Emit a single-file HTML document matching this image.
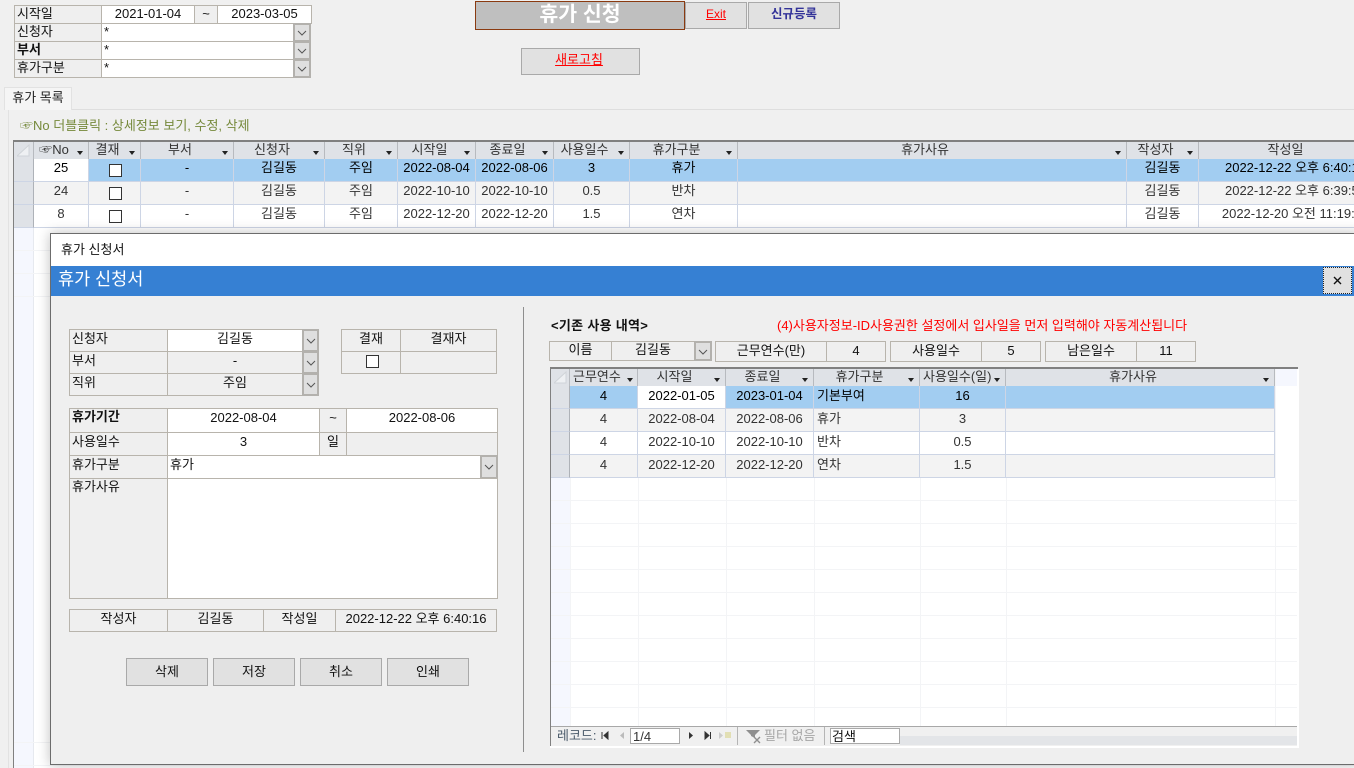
<!DOCTYPE html>
<html lang="ko"><head><meta charset="utf-8"><title>휴가 신청</title>
<style>
*{box-sizing:border-box}
html,body{margin:0;padding:0;width:1354px;height:768px;overflow:hidden;background:#f0f0f0}
body{position:relative;font:13px/16px "Liberation Sans","Noto Sans CJK KR",sans-serif;color:#111}
div,span,svg{position:absolute}
.c{white-space:nowrap;overflow:hidden;text-align:center}
.f{border:1px solid #b8b4ac;white-space:nowrap;overflow:hidden;text-align:center;background:#efefef;line-height:16px}
.d .f{padding-top:1px}
.l{text-align:left;padding-left:2px}
.w{background:#fff}
.dd{background:#dfdfdf;border:2px solid #b3b1ad}
.dd svg{left:2px;top:4px}
.btn{background:#e1e1e1;border:1px solid #a9a9a9;text-align:center;white-space:nowrap}
.red{color:#f00;text-decoration:underline}
.h{background:#dfe2e7;border-right:1px solid #b7babf;color:#333;height:17px;line-height:15px;top:0;text-align:center;white-space:nowrap;overflow:hidden;padding-right:14px}
.h i{position:absolute;right:5px;top:9px;width:0;height:0;border:3px solid transparent;border-top:4px solid #222;border-bottom:0}
.np{padding-right:0}
#sg .h{line-height:16px}
.r{left:0;height:23px;color:#333}
.r>div{top:0;height:23px;border-right:1px solid #cdd5e5;border-bottom:1px solid #cdd5e5;text-align:center;line-height:18px;white-space:nowrap;overflow:hidden}
#sg .r>div{padding-top:1px}
.sel{color:#000}.sel>div{background:#a2cdf1}
.alt>div{background:#f3f3f3}.wh>div{background:#fff}
.r>div.s{background:#dfe2e7;border-right:1px solid #aeb2b8}
.r>div.foc{background:#fff}
.a0{left:21px;width:55px}.a1{left:76px;width:52px}.a2{left:128px;width:93px}.a3{left:221px;width:91px}.a4{left:312px;width:73px}.a5{left:385px;width:78px}.a6{left:463px;width:78px}.a7{left:541px;width:76px}.a8{left:617px;width:108px}.a9{left:725px;width:389px}.a10{left:1114px;width:72px}.a11{left:1186px;width:194px}
.b0{left:20px;width:68px}.b1{left:88px;width:88px}.b2{left:176px;width:88px}.b3{left:264px;width:106px}.b4{left:370px;width:86px}.b5{left:456px;width:269px}
.ck{background:#fff;border:1px solid #333;width:13px;height:13px}
.q{left:0;width:100%;height:1px;background:#f3f4f6}
.v{top:0;bottom:0;width:1px;background:#f3f4f6}
</style></head><body>

<!-- top filter -->
<div class="f l" style="left:14px;top:5px;width:88px;height:19px">시작일</div>
<div class="f w" style="left:101px;top:5px;width:94px;height:19px">2021-01-04</div>
<div class="f" style="left:194px;top:5px;width:24px;height:19px">~</div>
<div class="f w" style="left:217px;top:5px;width:95px;height:19px">2023-03-05</div>
<div class="f l" style="left:14px;top:23px;width:88px;height:19px">신청자</div>
<div class="f l w" style="left:101px;top:23px;width:193px;height:19px">*</div>
<div class="dd" style="left:293px;top:23px;width:18px;height:19px"><svg width="10" height="8" viewBox="0 0 10 8"><path d="M1 2l4 4 4-4" fill="none" stroke="#555" stroke-width="1"/></svg></div>
<div class="f l" style="left:14px;top:41px;width:88px;height:19px;font-weight:bold">부서</div>
<div class="f l w" style="left:101px;top:41px;width:193px;height:19px">*</div>
<div class="dd" style="left:293px;top:41px;width:18px;height:19px"><svg width="10" height="8" viewBox="0 0 10 8"><path d="M1 2l4 4 4-4" fill="none" stroke="#555" stroke-width="1"/></svg></div>
<div class="f l" style="left:14px;top:59px;width:88px;height:19px">휴가구분</div>
<div class="f l w" style="left:101px;top:59px;width:193px;height:19px">*</div>
<div class="dd" style="left:293px;top:59px;width:18px;height:19px"><svg width="10" height="8" viewBox="0 0 10 8"><path d="M1 2l4 4 4-4" fill="none" stroke="#555" stroke-width="1"/></svg></div>

<!-- title and buttons -->
<div class="c" style="left:475px;top:1px;width:210px;height:29px;background:#bfbfbf;border:1px solid #8a3a10;color:#fff;font-weight:bold;font-size:20.500px;line-height:26px">휴가 신청</div>
<div class="btn" style="left:685px;top:2px;width:62px;height:27px;line-height:23px;font-size:12px"><span class="red" style="position:static">Exit</span></div>
<div class="btn" style="left:748px;top:2px;width:92px;height:27px;line-height:23px;color:#333399;font-weight:bold;font-size:12.500px">신규등록</div>
<div class="btn" style="left:521px;top:48px;width:119px;height:27px;line-height:22px;padding-right:3px"><span class="red" style="position:static">새로고침</span></div>

<!-- tab -->
<div style="left:8px;top:109px;width:1346px;height:1px;background:#dedede"></div>
<div style="left:8px;top:110px;width:1px;height:658px;background:#e2e2e2"></div>
<div class="c" style="left:4px;top:87px;width:68px;height:23px;background:#f5f5f5;border:1px solid #e2e2e2;border-bottom:0;line-height:20px;color:#222">휴가 목록</div>
<div class="c" style="left:20px;top:117px;width:260px;height:18px;line-height:17px;text-align:left;color:#75893a">☞No 더블클릭 : 상세정보 보기, 수정, 삭제</div>

<!-- main grid -->
<div style="left:13px;top:140px;width:1341px;height:628px;background:#fff;border-top:2px solid #808080;overflow:hidden">
  <div style="left:0;top:85px;width:20px;bottom:0;background:#f5f7fe"></div>
  <div class="v" style="left:20px;background:#e6e9ef"></div>
  <div class="q" style="top:108px"></div><div class="q" style="top:131px"></div><div class="q" style="top:154px"></div>
  <div class="q" style="top:600px"></div><div class="q" style="top:623px"></div>
  <div class="h np" style="left:0;width:21px"><svg style="left:4px;top:2px" width="13" height="13"><path d="M0 12L12 1V12Z" fill="#eef0f3" stroke="#cfd3d8"/></svg></div>
  <div class="h a0">☞No<i></i></div>
  <div class="h a1">결재<i></i></div>
  <div class="h a2">부서<i></i></div>
  <div class="h a3">신청자<i></i></div>
  <div class="h a4">직위<i></i></div>
  <div class="h a5">시작일<i></i></div>
  <div class="h a6">종료일<i></i></div>
  <div class="h a7">사용일수<i></i></div>
  <div class="h a8">휴가구분<i></i></div>
  <div class="h a9">휴가사유<i></i></div>
  <div class="h a10">작성자<i></i></div>
  <div class="h a11 np" style="width:174px">작성일</div>

  <div class="r sel" style="top:17px;width:1341px">
    <div class="s" style="left:0;width:21px"></div>
    <div class="a0 foc">25</div><div class="a1"></div><div class="a2">-</div><div class="a3">김길동</div><div class="a4">주임</div><div class="a5">2022-08-04</div><div class="a6">2022-08-06</div><div class="a7">3</div><div class="a8">휴가</div><div class="a9"></div><div class="a10">김길동</div><div class="a11">2022-12-22 오후 6:40:16</div>
  </div>
  <div class="r alt" style="top:40px;width:1341px">
    <div class="s" style="left:0;width:21px"></div>
    <div class="a0">24</div><div class="a1"></div><div class="a2">-</div><div class="a3">김길동</div><div class="a4">주임</div><div class="a5">2022-10-10</div><div class="a6">2022-10-10</div><div class="a7">0.5</div><div class="a8">반차</div><div class="a9"></div><div class="a10">김길동</div><div class="a11">2022-12-22 오후 6:39:55</div>
  </div>
  <div class="r wh" style="top:63px;width:1341px">
    <div class="s" style="left:0;width:21px"></div>
    <div class="a0">8</div><div class="a1"></div><div class="a2">-</div><div class="a3">김길동</div><div class="a4">주임</div><div class="a5">2022-12-20</div><div class="a6">2022-12-20</div><div class="a7">1.5</div><div class="a8">연차</div><div class="a9"></div><div class="a10">김길동</div><div class="a11">2022-12-20 오전 11:19:21</div>
  </div>
  <div class="ck" style="left:96px;top:22px"></div>
  <div class="ck" style="left:96px;top:45px"></div>
  <div class="ck" style="left:96px;top:68px"></div>
  <div style="left:0;top:0;width:1px;bottom:0;background:#808080"></div>
</div>

<!-- dialog -->
<div style="left:50px;top:233px;width:1310px;height:532px;background:#efefef;border:1px solid #6c6c6c;border-right:0;box-shadow:0 0 12px rgba(0,0,0,.25)"></div>
<div style="left:51px;top:234px;width:1303px;height:32px;background:#fff"></div>
<div class="c" style="left:61px;top:241px;width:90px;height:18px;line-height:17px;text-align:left">휴가 신청서</div>
<div style="left:51px;top:266px;width:1303px;height:30px;background:#3680d3"></div>
<div class="c" style="left:58px;top:269px;width:110px;height:22px;line-height:21px;text-align:left;color:#fff;font-size:17.500px">휴가 신청서</div>
<div style="left:1323px;top:267px;width:29px;height:27px;background:#e1e1e1;border:1px dotted #222"><svg style="left:8px;top:7px" width="11" height="11" viewBox="0 0 11 11"><path d="M2 2l7 7M9 2l-7 7" stroke="#111" stroke-width="1.400" fill="none"/></svg></div>

<!-- left form -->
<div class="d" style="left:0;top:0">
<div class="f l" style="left:69px;top:329px;width:99px;height:23px">신청자</div>
<div class="f w" style="left:167px;top:329px;width:136px;height:23px">김길동</div>
<div class="dd" style="left:302px;top:329px;width:17px;height:23px"><svg style="top:6px;left:2px" width="10" height="8" viewBox="0 0 10 8"><path d="M1 2l4 4 4-4" fill="none" stroke="#555"/></svg></div>
<div class="f l" style="left:69px;top:351px;width:99px;height:23px">부서</div>
<div class="f" style="left:167px;top:351px;width:136px;height:23px">-</div>
<div class="dd" style="left:302px;top:351px;width:17px;height:23px"><svg style="top:6px;left:2px" width="10" height="8" viewBox="0 0 10 8"><path d="M1 2l4 4 4-4" fill="none" stroke="#555"/></svg></div>
<div class="f l" style="left:69px;top:373px;width:99px;height:23px">직위</div>
<div class="f" style="left:167px;top:373px;width:136px;height:23px">주임</div>
<div class="dd" style="left:302px;top:373px;width:17px;height:23px"><svg style="top:6px;left:2px" width="10" height="8" viewBox="0 0 10 8"><path d="M1 2l4 4 4-4" fill="none" stroke="#555"/></svg></div>

<div class="f" style="left:341px;top:329px;width:60px;height:23px">결재</div>
<div class="f" style="left:400px;top:329px;width:97px;height:23px">결재자</div>
<div class="f" style="left:341px;top:351px;width:60px;height:23px"></div>
<div class="f" style="left:400px;top:351px;width:97px;height:23px"></div>
<div class="ck" style="left:366px;top:355px"></div>

<div class="f l" style="left:69px;top:408px;width:99px;height:25px;font-weight:bold;padding-top:0">휴가기간</div>
<div class="f w" style="left:167px;top:408px;width:153px;height:25px">2022-08-04</div>
<div class="f" style="left:319px;top:408px;width:28px;height:25px">~</div>
<div class="f w" style="left:346px;top:408px;width:152px;height:25px">2022-08-06</div>
<div class="f l" style="left:69px;top:432px;width:99px;height:24px">사용일수</div>
<div class="f w" style="left:167px;top:432px;width:153px;height:24px">3</div>
<div class="f" style="left:319px;top:432px;width:28px;height:24px">일</div>
<div class="f" style="left:346px;top:432px;width:152px;height:24px"></div>
<div class="f l" style="left:69px;top:455px;width:99px;height:24px">휴가구분</div>
<div class="f l w" style="left:167px;top:455px;width:314px;height:24px">휴가</div>
<div class="dd" style="left:480px;top:455px;width:18px;height:24px"><svg style="top:6px;left:2px" width="10" height="8" viewBox="0 0 10 8"><path d="M1 2l4 4 4-4" fill="none" stroke="#555"/></svg></div>
<div class="f l" style="left:69px;top:478px;width:99px;height:121px;padding-top:0">휴가사유</div>
<div class="f w" style="left:167px;top:478px;width:331px;height:121px"></div>

<div class="f" style="left:69px;top:609px;width:99px;height:23px">작성자</div>
<div class="f" style="left:167px;top:609px;width:97px;height:23px">김길동</div>
<div class="f" style="left:263px;top:609px;width:73px;height:23px">작성일</div>
<div class="f" style="left:335px;top:609px;width:162px;height:23px">2022-12-22 오후 6:40:16</div>
</div>

<div class="btn" style="left:126px;top:658px;width:82px;height:28px;line-height:25px">삭제</div>
<div class="btn" style="left:213px;top:658px;width:82px;height:28px;line-height:25px">저장</div>
<div class="btn" style="left:300px;top:658px;width:82px;height:28px;line-height:25px">취소</div>
<div class="btn" style="left:387px;top:658px;width:82px;height:28px;line-height:25px">인쇄</div>

<div style="left:523px;top:307px;width:1px;height:445px;background:#8e8e8e"></div>

<!-- right side -->
<div class="c" style="left:551px;top:318px;width:110px;height:17px;text-align:left;font-weight:bold;letter-spacing:.3px">&lt;기존 사용 내역&gt;</div>
<div class="c" style="left:777px;top:318px;width:420px;height:17px;text-align:left;color:#f00">(4)사용자정보-ID사용권한 설정에서 입사일을 먼저 입력해야 자동계산됩니다</div>

<div class="f" style="left:549px;top:341px;width:63px;height:20px">이름</div>
<div class="f" style="left:611px;top:341px;width:84px;height:20px">김길동</div>
<div class="dd" style="left:694px;top:341px;width:18px;height:20px"><svg style="top:5px;left:2px" width="10" height="8" viewBox="0 0 10 8"><path d="M1 2l4 4 4-4" fill="none" stroke="#555"/></svg></div>
<div class="f" style="left:715px;top:341px;width:112px;height:21px;padding-top:1px">근무연수(만)</div>
<div class="f" style="left:826px;top:341px;width:60px;height:21px;padding-top:1px">4</div>
<div class="f" style="left:890px;top:341px;width:92px;height:21px;padding-top:1px">사용일수</div>
<div class="f" style="left:981px;top:341px;width:60px;height:21px;padding-top:1px">5</div>
<div class="f" style="left:1045px;top:341px;width:92px;height:21px;padding-top:1px">남은일수</div>
<div class="f" style="left:1136px;top:341px;width:60px;height:21px;padding-top:1px">11</div>

<!-- sub grid -->
<div id="sg" style="left:550px;top:367px;width:748px;height:380px;background:#fff;border-top:2px solid #808080;overflow:hidden">
  <div style="left:0;top:0;width:20px;bottom:0;background:#f5f7fe"></div>
  <div style="left:725px;top:0;width:23px;height:17px;background:#f5f7fe"></div>
  <div class="q" style="top:131px"></div><div class="q" style="top:154px"></div><div class="q" style="top:177px"></div><div class="q" style="top:200px"></div><div class="q" style="top:223px"></div><div class="q" style="top:246px"></div><div class="q" style="top:269px"></div><div class="q" style="top:292px"></div><div class="q" style="top:315px"></div><div class="q" style="top:338px"></div>
  <div class="v" style="left:20px"></div><div class="v" style="left:88px"></div><div class="v" style="left:176px"></div><div class="v" style="left:264px"></div><div class="v" style="left:370px"></div><div class="v" style="left:456px"></div><div class="v" style="left:725px"></div>
  <div class="h np" style="left:0;width:20px"><svg style="left:4px;top:2px" width="13" height="13"><path d="M0 12L12 1V12Z" fill="#eef0f3" stroke="#cfd3d8"/></svg></div>
  <div class="h b0" style="text-align:left;padding-left:3px">근무연수<i style="right:4px"></i></div>
  <div class="h b1">시작일<i></i></div>
  <div class="h b2">종료일<i></i></div>
  <div class="h b3">휴가구분<i></i></div>
  <div class="h b4"><span style="left:3px;top:0;width:70px;overflow:hidden;text-align:left">사용일수(일)</span><i></i></div>
  <div class="h b5">휴가사유<i></i></div>

  <div class="r sel" style="top:17px;width:725px">
    <div class="s" style="left:0;width:20px"></div><div class="b0">4</div><div class="b1 foc">2022-01-05</div><div class="b2">2023-01-04</div><div class="b3" style="text-align:left;padding-left:3px">기본부여</div><div class="b4">16</div><div class="b5"></div>
  </div>
  <div class="r alt" style="top:40px;width:725px">
    <div class="s" style="left:0;width:20px"></div><div class="b0">4</div><div class="b1">2022-08-04</div><div class="b2">2022-08-06</div><div class="b3" style="text-align:left;padding-left:3px">휴가</div><div class="b4">3</div><div class="b5"></div>
  </div>
  <div class="r wh" style="top:63px;width:725px">
    <div class="s" style="left:0;width:20px"></div><div class="b0">4</div><div class="b1">2022-10-10</div><div class="b2">2022-10-10</div><div class="b3" style="text-align:left;padding-left:3px">반차</div><div class="b4">0.5</div><div class="b5"></div>
  </div>
  <div class="r alt" style="top:86px;width:725px">
    <div class="s" style="left:0;width:20px"></div><div class="b0">4</div><div class="b1">2022-12-20</div><div class="b2">2022-12-20</div><div class="b3" style="text-align:left;padding-left:3px">연차</div><div class="b4">1.5</div><div class="b5"></div>
  </div>
  <div style="left:0;top:0;width:1px;bottom:0;background:#808080"></div>
</div>

<!-- nav bar -->
<div style="left:551px;top:726px;width:746px;height:20px;background:#f0f0f0;border-top:1px solid #a8a8a8"></div>
<div style="left:900px;top:736px;width:397px;height:9px;background:#e3e5e8"></div>
<div style="left:1297px;top:369px;width:2px;height:378px;background:#fff"></div>
<div style="left:550px;top:746px;width:749px;height:2px;background:#fff"></div>
<div class="c" style="left:557px;top:728px;width:42px;height:17px;line-height:16px;text-align:left;color:#4a5a6a">레코드:</div>
<svg style="left:600px;top:730px" width="135" height="11" viewBox="0 0 135 11">
  <path d="M2 2v7M8 2v7L4 5.500z" fill="#333" stroke="#333" stroke-width="1"/>
  <path d="M24 2v7L20 5.500z" fill="#bbb"/>
  <path d="M89 2v7l4-3.500z" fill="#333"/>
  <path d="M105 2v7l4-3.500z M110.500 2v7" fill="#333" stroke="#333" stroke-width="1"/>
  <path d="M119 2v7l4-3.500z" fill="#ccc"/>
  <path d="M125 2h6v6h-6z" fill="#e2dfb4"/>
</svg>
<div class="c" style="left:630px;top:728px;width:50px;height:16px;background:#fff;border:1px solid #a9a9a9;text-align:left;padding-left:2px;line-height:15px;color:#333">1/4</div>
<div style="left:737px;top:727px;width:1px;height:18px;background:#b5b5b5"></div>
<svg style="left:745px;top:728px" width="17" height="16" viewBox="0 0 17 16"><path d="M1 2h14L10 7v3L6 8V7z" fill="#8f8f8f"/><path d="M9 9l6 6M15 9l-6 6" stroke="#8f8f8f" stroke-width="1.400"/></svg>
<div class="c" style="left:764px;top:728px;width:56px;height:17px;line-height:16px;color:#a6a6a6;text-align:left">필터 없음</div>
<div style="left:824px;top:727px;width:1px;height:18px;background:#b5b5b5"></div>
<div class="c" style="left:830px;top:728px;width:70px;height:16px;background:#fff;border:1px solid #a9a9a9;text-align:left;padding-left:1px;line-height:15px">검색</div>

</body></html>
